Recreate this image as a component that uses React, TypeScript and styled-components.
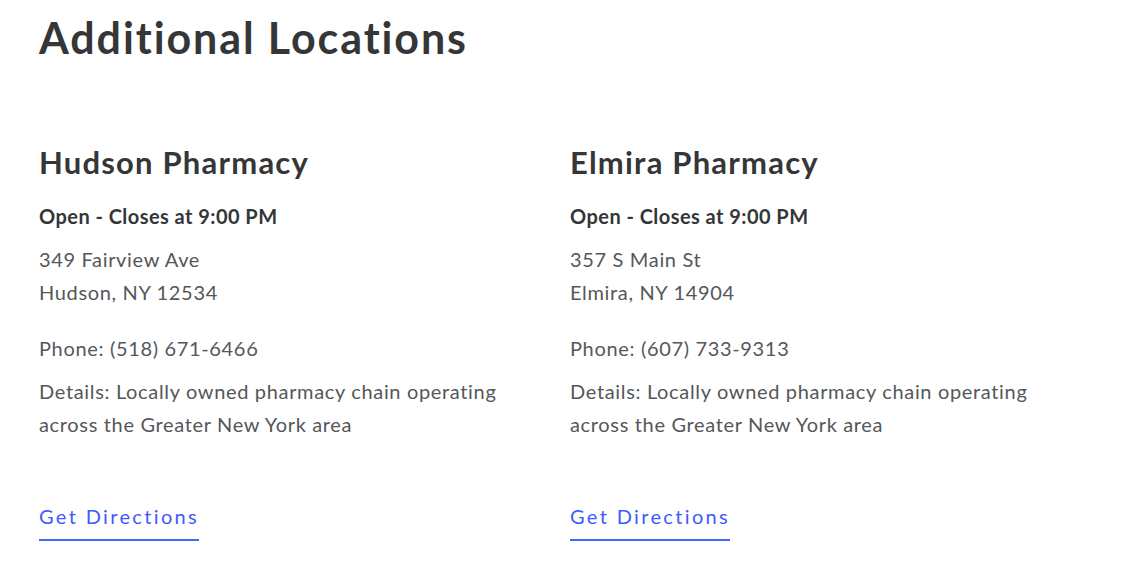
import React from "react";
import styled, { createGlobalStyle } from "styled-components";

const Global = createGlobalStyle`
  html, body { margin: 0; padding: 0; background: #ffffff; }
  body { font-family: "Lato", "Open Sans", sans-serif; -webkit-font-smoothing: antialiased; }
`;

const Page = styled.main`
  padding: 12px 39px 0 39px;
  box-sizing: border-box;
  width: 1142px;
`;

const Title = styled.h1`
  margin: 0;
  font-size: 43px;
  line-height: 52px;
  font-weight: 700;
  letter-spacing: 1.9px;
  color: #343638;
`;

const Grid = styled.div`
  display: grid;
  grid-template-columns: 531px 531px;
  margin-top: 79px;
`;

const Card = styled.section`
  display: flex;
  flex-direction: column;
  align-items: flex-start;
`;

const Name = styled.h2`
  margin: 0;
  font-size: 31px;
  line-height: 38px;
  font-weight: 700;
  letter-spacing: 1.2px;
  color: #343638;
`;

const Status = styled.p`
  margin: 21px 0 0 0;
  font-size: 20px;
  line-height: 28px;
  font-weight: 700;
  letter-spacing: 0.45px;
  color: #343638;
`;

const Text = styled.p<{ $gap?: number }>`
  margin: ${(p) => p.$gap ?? 0}px 0 0 0;
  font-size: 20px;
  line-height: 33px;
  letter-spacing: 0.66px;
  color: #555759;
`;

const Link = styled.a`
  margin-top: 61px;
  font-size: 20px;
  line-height: 28px;
  letter-spacing: 2.35px;
  color: #3d5afe;
  text-decoration: none;
  padding-bottom: 9px;
  border-bottom: 2px solid #4a65fb;
`;

const locations = [
  {
    name: "Hudson Pharmacy",
    street: "349 Fairview Ave",
    city: "Hudson, NY 12534",
    phone: "(518) 671-6466",
  },
  {
    name: "Elmira Pharmacy",
    street: "357 S Main St",
    city: "Elmira, NY 14904",
    phone: "(607) 733-9313",
  },
];

export default function App() {
  return (
    <Page>
      <Global />
      <Title>Additional Locations</Title>
      <Grid>
        {locations.map((l) => (
          <Card key={l.name}>
            <Name>{l.name}</Name>
            <Status>Open - Closes at 9:00 PM</Status>
            <Text $gap={13}>
              {l.street}
              <br />
              {l.city}
            </Text>
            <Text $gap={23}>Phone: {l.phone}</Text>
            <Text $gap={10}>
              Details: Locally owned pharmacy chain operating
              <br />
              across the Greater New York area
            </Text>
            <Link href="#">Get Directions</Link>
          </Card>
        ))}
      </Grid>
    </Page>
  );
}
